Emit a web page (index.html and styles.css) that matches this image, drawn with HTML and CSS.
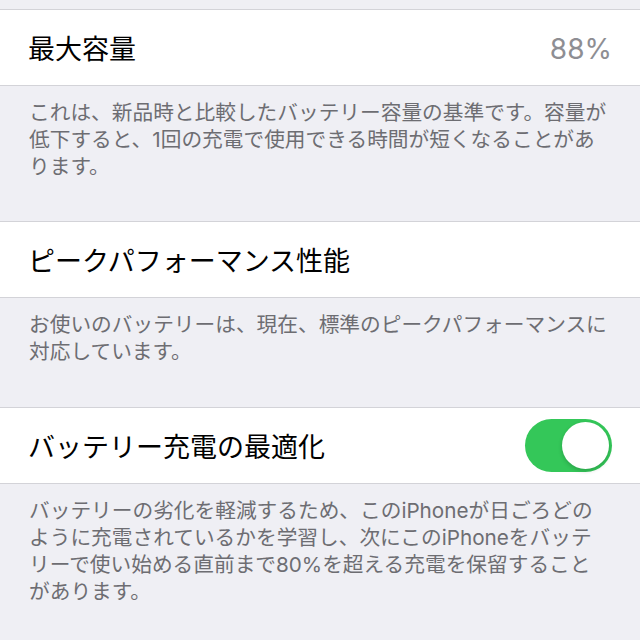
FILE: index.html
```html
<!DOCTYPE html>
<html lang="ja">
<head>
<meta charset="utf-8">
<title>バッテリーの状態</title>
<link rel="stylesheet" href="styles.css">
</head>
<body>
<div class="page">
  <div class="top-gap"></div>

  <div class="cell">
    <span class="cell-title">最大容量</span>
    <span class="cell-value">88%</span>
  </div>
  <div class="footer footer-tall">これは、新品時と比較したバッテリー容量の基準です。容量が<br>低下すると、1回の充電で使用できる時間が短くなることがあ<br>ります。</div>

  <div class="cell">
    <span class="cell-title">ピークパフォーマンス性能</span>
  </div>
  <div class="footer">お使いのバッテリーは、現在、標準のピークパフォーマンスに<br>対応しています。</div>

  <div class="cell">
    <span class="cell-title">バッテリー充電の最適化</span>
    <span class="toggle"><span class="knob"></span></span>
  </div>
  <div class="footer">バッテリーの劣化を軽減するため、このiPhoneが日ごろどの<br>ように充電されているかを学習し、次にこのiPhoneをバッテ<br>リーで使い始める直前まで80%を超える充電を保留すること<br>があります。</div>
</div>
</body>
</html>
```
FILE: styles.css
```css
html, body {
  margin: 0;
  padding: 0;
  background: #efeff4;
}

.page {
  width: 640px;
  height: 640px;
  overflow: hidden;
  font-family: "Inter", "Noto Sans CJK JP", sans-serif;
}

.top-gap {
  height: 9px;
}

.cell {
  display: flex;
  align-items: center;
  justify-content: space-between;
  height: 75px;
  padding: 0 28px 0 28px;
  background: #ffffff;
  border-top: 1px solid #d3d3d8;
  border-bottom: 1px solid #d3d3d8;
}

.cell-title {
  font-size: 27px;
  color: #000000;
  line-height: 1;
  padding-top: 3px;
}

.cell-value {
  font-size: 28px;
  color: #8e8e93;
  line-height: 1;
  padding-top: 3px;
}

.toggle {
  position: relative;
  width: 87px;
  height: 53px;
  border-radius: 27px;
  background: #34c759;
  margin-top: -1px;
}

.knob {
  position: absolute;
  top: 3px;
  right: 3px;
  width: 47px;
  height: 47px;
  border-radius: 50%;
  background: #ffffff;
  box-shadow: 0 2px 4px rgba(0, 0, 0, 0.18);
}

.footer {
  height: 55px;
  padding: 13px 20px 41px 29px;
  font-size: 20.7px;
  line-height: 27px;
  color: #6d6d72;
  white-space: nowrap;
}

.footer-tall {
  height: 81px;
}
```
